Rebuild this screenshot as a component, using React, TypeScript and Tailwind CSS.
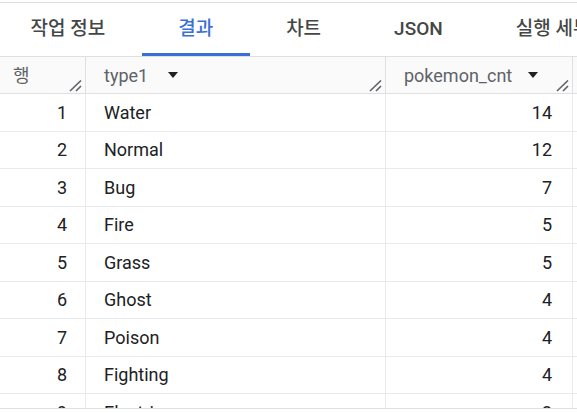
const tabs = ['작업 정보', '결과', '차트', 'JSON', '실행 세부정보'];

const rows = [
  { n: 1, type: 'Water', cnt: 14 },
  { n: 2, type: 'Normal', cnt: 12 },
  { n: 3, type: 'Bug', cnt: 7 },
  { n: 4, type: 'Fire', cnt: 5 },
  { n: 5, type: 'Grass', cnt: 5 },
  { n: 6, type: 'Ghost', cnt: 4 },
  { n: 7, type: 'Poison', cnt: 4 },
  { n: 8, type: 'Fighting', cnt: 4 },
  { n: 9, type: 'Electric', cnt: 3 },
];

const Handle = () => (
  <svg className="absolute right-[3px] bottom-[1px]" width="13" height="12" viewBox="0 0 13 12">
    <path d="M1 11 L12 0.5 M7 11 L12 6" stroke="#5f6368" strokeWidth="1.6" fill="none" />
  </svg>
);

const Caret = () => (
  <svg width="10" height="6" viewBox="0 0 10 6">
    <path d="M0 0 L10 0 L5 6 Z" fill="#202124" />
  </svg>
);

const App = () => {
  return (
    <div
      className="w-[577px] h-[413px] bg-white overflow-hidden pt-[2px]"
      style={{ fontFamily: 'Roboto, "Noto Sans CJK KR", sans-serif' }}
    >
      <div className="border-t border-[#e0e0e0]">
        <div className="flex h-[54px] -ml-[6px] border-b border-[#e0e0e0] whitespace-nowrap">
          {tabs.map((t, i) => (
            <div
              key={t}
              className={`relative flex items-center px-[36.5px] text-[19px] font-medium ${
                i === 1 ? 'text-[#3a6fd8]' : 'text-[#444746]'
              }`}
            >
              {t}
              {i === 1 && <div className="absolute left-0 right-0 bottom-0 h-[3px] bg-[#3a6fd8]" />}
            </div>
          ))}
        </div>

        <div className="grid grid-cols-[86px_300px_187px_1fr] h-[37px] bg-[#fafafa] border-b border-[#e0e0e0] text-[18px] text-[#5f6368]">
          <div className="relative flex items-center pl-[13px] border-r border-[#e0e0e0]">
            행
            <Handle />
          </div>
          <div className="relative flex items-center gap-[20px] pl-[18px] border-r border-[#e0e0e0]">
            type1
            <Caret />
            <Handle />
          </div>
          <div className="relative flex items-center gap-[16px] pl-[18px] border-r border-[#e0e0e0]">
            pokemon_cnt
            <Caret />
            <Handle />
          </div>
          <div />
        </div>

        <div className="h-[315px] overflow-hidden border-b border-[#e0e0e0] text-[18px] text-[#202124]">
          {rows.map((r) => (
            <div key={r.n} className="grid grid-cols-[86px_300px_187px_1fr] h-[37.5px] border-b border-[#e8eaed]">
              <div className="flex items-center justify-end pr-[18px] border-r border-[#e8eaed]">{r.n}</div>
              <div className="flex items-center pl-[18px] border-r border-[#e8eaed]">{r.type}</div>
              <div className="flex items-center justify-end pr-[20px] border-r border-[#e8eaed]">{r.cnt}</div>
              <div />
            </div>
          ))}
        </div>
      </div>
    </div>
  );
};

export default App;
